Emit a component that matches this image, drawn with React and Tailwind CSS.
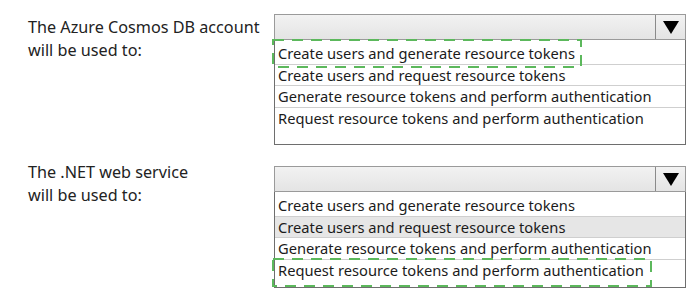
const optionsA = [
  "Create users and generate resource tokens",
  "Create users and request resource tokens",
  "Generate resource tokens and perform authentication",
  "Request resource tokens and perform authentication",
];

function DropArrow() {
  return (
    <svg width="16" height="13" viewBox="0 0 16 13">
      <polygon points="0,0 16,0 8,13" fill="#000" />
    </svg>
  );
}

function Dropdown({ listHeight, highlight }) {
  return (
    <div className="w-[412px]">
      <div className="flex h-[26px] border border-[#9a9a9a] bg-gradient-to-b from-[#f2f2f2] to-[#e4e4e4]">
        <div className="flex-1" />
        <div className="w-[30px] border-l border-[#8a8a8a] flex items-center justify-center">
          <DropArrow />
        </div>
      </div>
      <div
        className="border border-t-0 border-[#6e6e6e] bg-white pt-[3px]"
        style={{ height: listHeight }}
      >
        {optionsA.map((o, i) => (
          <div
            key={o}
            className={`h-[21.5px] flex items-center pl-[3px] text-[14.7px] text-[#1b1b1b] ${
              i < optionsA.length - 1 ? "border-b border-[#cfcfcf]" : ""
            } ${highlight === i ? "bg-[#e6e6e6]" : ""}`}
          >
            {o}
          </div>
        ))}
      </div>
    </div>
  );
}

function Answer({ left, top, width, height }) {
  return (
    <svg
      className="absolute pointer-events-none"
      style={{ left, top }}
      width={width}
      height={height}
    >
      <rect
        x="1"
        y="1"
        width={width - 2}
        height={height - 2}
        fill="none"
        stroke="#5cb85c"
        strokeWidth="2"
        strokeDasharray="11 8"
      />
    </svg>
  );
}

export default function App() {
  return (
    <div
      className="relative w-[694px] h-[304px] bg-white overflow-hidden"
      style={{ fontFamily: '"Noto Sans", "Open Sans", sans-serif' }}
    >
      <div className="flex pt-[14px]">
        <div className="w-[274px] pl-[28px] pt-[2px] text-[16.2px] leading-[23px] text-[#222]">
          The Azure Cosmos DB account
          <br />
          will be used to:
        </div>
        <Dropdown listHeight={105} />
      </div>
      <div className="flex pt-[21px]">
        <div className="w-[274px] pl-[28px] text-[16.2px] leading-[23px] text-[#222] -mt-[5px]">
          The .NET web service
          <br />
          will be used to:
        </div>
        <Dropdown listHeight={96} highlight={1} />
      </div>
      <Answer left={272} top={39} width={310} height={29} />
      <Answer left={272} top={258} width={380} height={29} />
    </div>
  );
}
